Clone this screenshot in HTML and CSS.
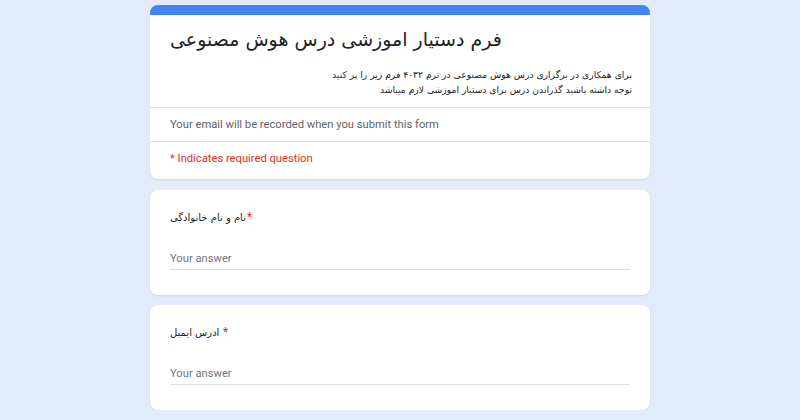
FILE: index.html
```html
<!DOCTYPE html>
<html lang="fa">
<head>
<meta charset="utf-8">
<link rel="stylesheet" href="styles.css">
</head>
<body>
<main class="form">
  <section class="card header-card">
    <div class="head">
      <h1 class="title">فرم دستیار اموزشی درس هوش مصنوعی</h1>
      <div class="desc" dir="rtl">
        <div>برای همکاری در برگزاری درس هوش مصنوعی در ترم ۴۰۳۲ فرم زیر را پر کنید</div>
        <div>توجه داشته باشید گذراندن درس برای دستیار اموزشی لازم میباشد</div>
      </div>
    </div>
    <div class="row email-note">Your email will be recorded when you submit this form</div>
    <div class="row required-note">* Indicates required question</div>
  </section>

  <section class="card question">
    <div class="label"><span class="fa">نام و نام خانوادگی</span><span class="star">*</span></div>
    <div class="answer">Your answer</div>
  </section>

  <section class="card question">
    <div class="label"><span class="fa">ادرس ایمیل</span> <span class="star">*</span></div>
    <div class="answer">Your answer</div>
  </section>
</main>
</body>
</html>
```

FILE: styles.css
```css
html, body {
  margin: 0;
  padding: 0;
  background: #e3ebfa;
}
body {
  padding-top: 5px;
  font-family: Roboto, "DejaVu Sans", sans-serif;
  color: #202124;
}
.form {
  width: 500px;
  margin: 0 auto;
  display: flex;
  flex-direction: column;
  gap: 10px;
}
.card {
  background: #fff;
  border-radius: 8px;
  box-shadow: 0 1px 2px rgba(60, 64, 67, 0.12);
}
.header-card {
  border-top: 10px solid #4285f4;
  margin-bottom: 1px;
}
.head {
  padding: 8px 18px 10px 20px;
  border-bottom: 1px solid #e0e0e0;
}
.title {
  margin: 0;
  font-family: "DejaVu Sans", sans-serif;
  font-weight: normal;
  font-size: 19px;
  line-height: 32px;
  color: #202124;
}
.desc {
  margin-top: 12px;
  font-family: "DejaVu Sans", sans-serif;
  font-size: 9.2px;
  line-height: 15px;
  color: #202124;
}
.row {
  padding: 0 20px;
  font-size: 11.2px;
  line-height: 33px;
}
.email-note {
  color: #5f6368;
  border-bottom: 1px solid #e0e0e0;
}
.required-note {
  color: #d93025;
  padding-bottom: 4px;
}
.question {
  padding: 19px 20px 25px 20px;
}
.label {
  font-size: 10px;
  line-height: 16px;
  height: 16px;
}
.fa {
  font-family: "DejaVu Sans", sans-serif;
}
.star {
  color: #d93025;
  font-family: Roboto, sans-serif;
  font-size: 12px;
  line-height: 16px;
  margin-left: 1px;
}
.answer {
  margin-top: 24px;
  font-size: 11.2px;
  line-height: 20px;
  color: #70757a;
  border-bottom: 1px solid #e0e0e0;
}
```
